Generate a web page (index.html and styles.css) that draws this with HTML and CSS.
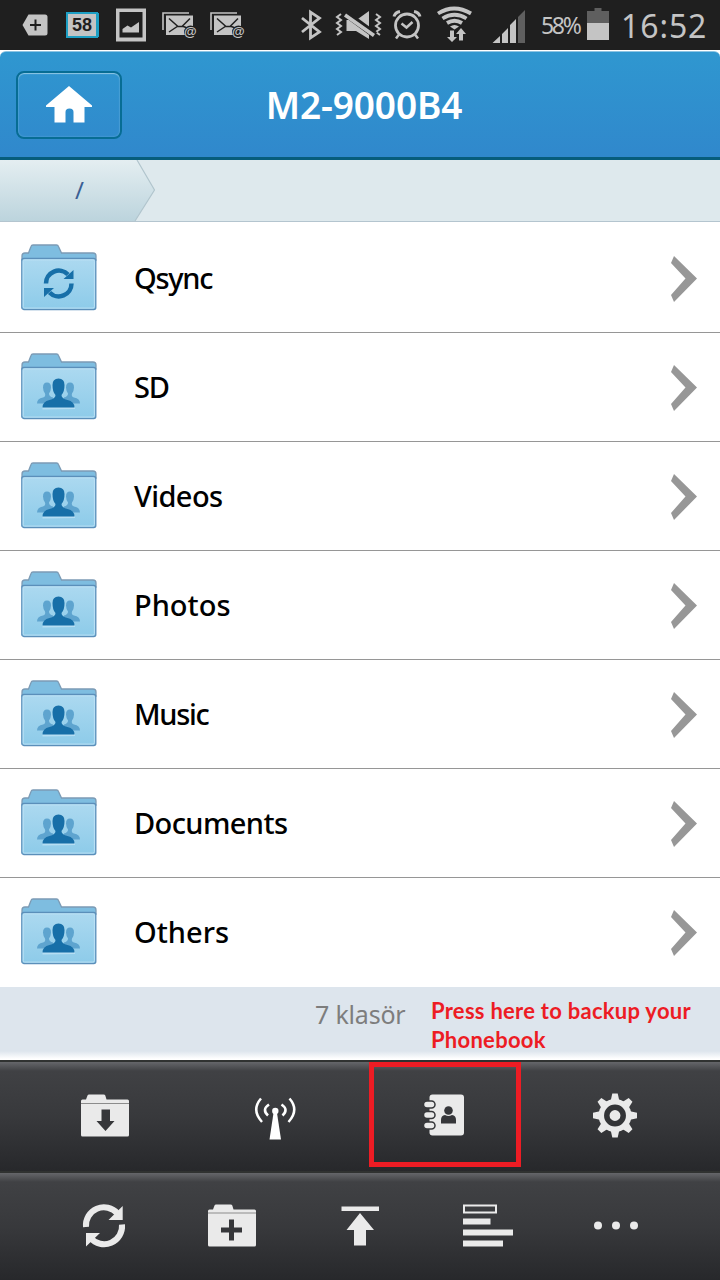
FILE: index.html
```html
<!DOCTYPE html>
<html lang="tr">

<head>
    <meta charset="UTF-8">
    <meta name="viewport" content="width=device-width, initial-scale=1.0">
    <title>M2-9000B4</title>
    <link rel="stylesheet" href="styles.css">
</head>

<body>

    <!-- shared icons -->
    <svg class="defs" width="0" height="0">
        <defs>
            <linearGradient id="folderFill" x1="0" y1="0" x2="0" y2="1">
                <stop offset="0" stop-color="#acd9f0" />
                <stop offset="1" stop-color="#8dcbe9" />
            </linearGradient>
            <linearGradient id="crumbFill" x1="0" y1="0" x2="0" y2="1">
                <stop offset="0" stop-color="#e4eef1" />
                <stop offset="1" stop-color="#bcd4dd" />
            </linearGradient>
        </defs>
        <symbol id="folder" viewBox="0 0 78 70">
            <path d="M2 17V13q0-3 3-3H8.500L11 3.500Q11.500 2 13 2H36.500Q38 2 38.500 3.500L41.500 10H73q3 0 3 3v4z" fill="#7ebde0" stroke="#7c9bb5" stroke-width="1.300" />
            <rect x="1.800" y="15.500" width="74" height="51" rx="2" fill="url(#folderFill)" stroke="#5b8fba" stroke-width="1.300" />
            <rect x="3.200" y="16.900" width="71.200" height="48.200" rx="1.500" fill="none" stroke="#bce1f5" />
        </symbol>
        <symbol id="people" viewBox="0 0 78 70">
            <path d="M17 59.500q0-5 6-6 3-1 2-4-2-3-2-6 0-5 4-5t4 5q0 3-2 6 0 3 4 4v6zM60 59.500q0-5-6-6-3-1-2-4 2-3 2-6 0-5-4-5t-4 5q0 3 2 6 0 3-4 4v6z" fill="#5ea4cf" />
            <path d="M22.500 65.500V63H55v2z" fill="#b6def3" />
            <path d="M22.500 63.500q0-6 7-7.500 6-1.500 6-5-3-3-3-10 0-6.500 6-6.500t6 6.500q0 7-3 10 0 3.500 6 5 7 1.500 7 7.500z" fill="#176fa8" />
        </symbol>
        <symbol id="chevron" viewBox="0 0 28 48">
            <path d="M4 1L27 23.500 4 47 1 40 15.500 23.500 1 8z" fill="#979797" />
        </symbol>
        <symbol id="mail" viewBox="0 0 36 50">
            <path d="M1 30V13H27" fill="none" stroke="#c4c4c4" stroke-width="1.600" />
            <path d="M4 15.500H31V35H4z" fill="#c4c4c4" />
            <path d="M7 18.500l9 8h4l8-8M7 32l9-6M28 29l-8-3" fill="none" stroke="#1f1f1f" stroke-width="1.500" />
            <circle cx="28.500" cy="32" r="6.500" fill="#1f1f1f" />
        </symbol>
    </svg>

    <div class="status">
        <svg class="st-plus" width="26" height="50" viewBox="22 0 26 50">
            <path d="M28.500 14.500H45q2.500 0 2.500 2.500V33q0 2.500-2.500 2.500H28.500L22.500 25z" fill="#c4c4c4" />
            <path d="M30 25H41M35.500 19.500V30.500" stroke="#1f1f1f" stroke-width="2" />
        </svg>
        <span class="st-charge">58</span>
        <svg class="st-picture" width="30" height="50" viewBox="116 0 30 50">
            <path d="M116 8.500H146V41.500H116zM119.500 12V37.500H142.500V12z" fill="#c4c4c4" fill-rule="evenodd" />
            <path d="M122.500 32.500V29l5-3.500 3.500 2 8-5.500V32.500z" fill="#c4c4c4" />
        </svg>
        <div class="st-mail first">
            <svg width="36" height="50"><use href="#mail" /></svg>
            <span class="at">@</span>
        </div>
        <div class="st-mail">
            <svg width="36" height="50"><use href="#mail" /></svg>
            <span class="at">@</span>
        </div>
        <svg class="st-right" width="240" height="50" viewBox="298 0 240 50" fill="#c4c4c4">
            <path d="M302 18L319.500 32 310.500 38V12L319.500 18 302 32" fill="none" stroke="#c4c4c4" stroke-width="2.800" />
            <g fill="none" stroke="#c4c4c4" stroke-width="2">
                <path d="M341 14l-4 3 4 3-4 3 4 3-4 3 4 3-4 3M376 14l4 3-4 3 4 3-4 3 4 3-4 3 4 3" />
            </g>
            <path d="M346.500 20V31H356L369 39V11L356.500 20z" />
            <path d="M345 13L375 35" stroke="#1f1f1f" stroke-width="7" />
            <path d="M345 15L374 35.500" stroke="#c4c4c4" stroke-width="3.600" />
            <circle cx="407" cy="25.500" r="11.500" fill="none" stroke="#c4c4c4" stroke-width="2.800" />
            <path d="M401.500 23.500l5 4 6-5.500M399 34.500l-3 4M415 34.500l3 4" fill="none" stroke="#c4c4c4" stroke-width="2.500" />
            <path d="M394 16.500q1-4 6-5M420 16.500q-1-4-6-5" fill="none" stroke="#c4c4c4" stroke-width="3" />
            <g fill="none" stroke="#c4c4c4" stroke-width="3.800">
                <path d="M438 13.500q16-10 33 0M442.500 18.500q12-7.500 24 0M447 23q7.500-4.500 15 0" />
            </g>
            <path d="M450 26.500q4.500-3 9 0l-4.500 3z" />
            <path d="M450 30.500h4V37h3l-5 5-5-5h3zM459 40.500h4V34h3l-5-6-5 6h3z" />
            <path d="M492.500 43L500 36V43zM502 34L508 28V43H502zM510 25L516 19V43H510z" />
            <path d="M518 17L525 10V43H518z" fill="#5f5f5f" />
        </svg>
        <span class="st-percent">58%</span>
        <svg class="st-battery" width="22" height="50" viewBox="587 0 22 50">
            <path d="M587 11H594.500V8H601.500V11H609V23H587z" fill="#5f5f5f" />
            <path d="M587 23H609V40H587z" fill="#c4c4c4" />
        </svg>
        <span class="st-time">16:52</span>
    </div>

    <header>
        <button class="home">
            <svg width="46" height="37" viewBox="0 0 46 37">
                <path d="M23 0L46 19.500V21H38.500V36.500H27.500V26q0-3.500-4-3.500t-4 3.500V36.500H8.500V21H0V19.500z" fill="#fff" />
            </svg>
        </button>
        <h1>M2-9000B4</h1>
    </header>

    <nav class="crumbs">
        <svg class="crumb-bg" width="156" height="62" viewBox="0 0 156 62">
            <path d="M0 0H137L154.500 30 135 61H0z" fill="url(#crumbFill)" />
            <path d="M137 0L154.500 30 135 61" fill="none" stroke="#b1c5cd" stroke-width="1.200" />
        </svg>
        <span class="crumb">/</span>
    </nav>

    <main>
        <div class="row">
            <svg class="folder" width="78" height="70">
                <use href="#folder" />
                <g fill="none" stroke="#176fa8" stroke-width="4.500">
                    <path d="M26 40.500A12.800 12.800 0 0 1 48 31.500M51.500 40.500A12.800 12.800 0 0 1 29.500 49.500" />
                </g>
                <path d="M53.500 27V36H43.500zM24 54V45H34z" fill="#176fa8" />
            </svg>
            <span class="name tight">Qsync</span>
            <svg class="chevron" width="28" height="48"><use href="#chevron" /></svg>
        </div>
        <div class="row">
            <svg class="folder" width="78" height="70"><use href="#folder" /><use href="#people" y="-8" /></svg>
            <span class="name tight">SD</span>
            <svg class="chevron" width="28" height="48"><use href="#chevron" /></svg>
        </div>
        <div class="row">
            <svg class="folder" width="78" height="70"><use href="#folder" /><use href="#people" y="-8" /></svg>
            <span class="name">Videos</span>
            <svg class="chevron" width="28" height="48"><use href="#chevron" /></svg>
        </div>
        <div class="row">
            <svg class="folder" width="78" height="70"><use href="#folder" /><use href="#people" y="-8" /></svg>
            <span class="name loose">Photos</span>
            <svg class="chevron" width="28" height="48"><use href="#chevron" /></svg>
        </div>
        <div class="row">
            <svg class="folder" width="78" height="70"><use href="#folder" /><use href="#people" y="-8" /></svg>
            <span class="name tight">Music</span>
            <svg class="chevron" width="28" height="48"><use href="#chevron" /></svg>
        </div>
        <div class="row">
            <svg class="folder" width="78" height="70"><use href="#folder" /><use href="#people" y="-8" /></svg>
            <span class="name">Documents</span>
            <svg class="chevron" width="28" height="48"><use href="#chevron" /></svg>
        </div>
        <div class="row">
            <svg class="folder" width="78" height="70"><use href="#folder" /><use href="#people" y="-8" /></svg>
            <span class="name loose">Others</span>
            <svg class="chevron" width="28" height="48"><use href="#chevron" /></svg>
        </div>
    </main>

    <div class="summary">
        <span class="count">7 klasör</span>
        <p class="hint">Press here to backup your<br>Phonebook</p>
    </div>

    <div class="toolbar top">
        <div class="tool">
            <svg width="52" height="52" viewBox="0 0 52 52">
                <path d="M2 11q0-1.500 1.500-1.500H7L8.500 5.500Q9 4.500 10 4.500H24.500Q26 4.500 26.300 5.500L27.500 9.500H48.500Q50 9.500 50 11V45q0 1.500-1.500 1.500H3.500Q2 46.500 2 45z" fill="#eaeaea" />
                <path d="M2 13.500H50" stroke="#8c8c8c" />
                <path d="M22.500 19.500H31V31H35.500L26.500 41 17.500 31H22.500z" fill="#36373a" />
            </svg>
        </div>
        <div class="tool">
            <svg width="52" height="52" viewBox="0 0 52 52" fill="#fff">
                <circle cx="26.300" cy="21" r="3.200" />
                <path d="M24.500 23H28L32 49.500H20.500z" />
                <g fill="none" stroke="#fff">
                    <path d="M12 8.500Q2 20 13 32M40.500 8.500Q50.500 20 39.500 32" stroke-width="2.500" />
                    <path d="M20 14.500Q12.500 19.500 19 25.500M32.500 14.500Q40 19.500 33.500 25.500" stroke-width="2.600" />
                </g>
            </svg>
        </div>
        <div class="tool">
            <svg width="52" height="52" viewBox="0 0 52 52">
                <rect x="10.500" y="4.500" width="34.500" height="41" rx="3" fill="#eaeaea" />
                <g fill="#eaeaea" stroke="#36373a" stroke-width="1.500">
                    <rect x="4.500" y="11" width="11.500" height="7" rx="3.500" />
                    <rect x="4.500" y="21.500" width="11.500" height="7" rx="3.500" />
                    <rect x="4.500" y="32" width="11.500" height="7" rx="3.500" />
                </g>
                <circle cx="29.500" cy="20.500" r="4.300" fill="#36373a" />
                <path d="M22 33.500V30q0-4.500 4-5 3.500 2 7 0 4 .5 4 5V33.500z" fill="#36373a" />
            </svg>
            <div class="highlight"></div>
        </div>
        <div class="tool">
            <svg width="52" height="52" viewBox="-26 -25.500 52 52" fill="#eaeaea">
                <path id="teeth" d="M-4.500-14L-2.700-22H2.700L4.500-14V14L2.700 22H-2.700L-4.500 14z" />
                <use href="#teeth" transform="rotate(45)" />
                <use href="#teeth" transform="rotate(90)" />
                <use href="#teeth" transform="rotate(135)" />
                <circle r="16.500" />
                <circle r="8.200" fill="#eaeaea" stroke="#333437" stroke-width="5.500" />
            </svg>
        </div>
    </div>

    <div class="toolbar bottom">
        <div class="tool">
            <svg width="52" height="52" viewBox="0 0 52 52">
                <path d="M8 27A18 18 0 0 1 39.500 13.500M44 24.500A18 18 0 0 1 12.500 38" fill="none" stroke="#eaeaea" stroke-width="6" />
                <path d="M44.700 6V20H30.500zM8 46.500V33H22z" fill="#eaeaea" />
            </svg>
        </div>
        <div class="tool">
            <svg width="52" height="52" viewBox="0 0 52 52">
                <path d="M2 11q0-1.500 1.500-1.500H7L8.500 5.500Q9 4.500 10 4.500H24.500Q26 4.500 26.300 5.500L27.500 9.500H48.500Q50 9.500 50 11V45q0 1.500-1.500 1.500H3.500Q2 46.500 2 45z" fill="#eaeaea" />
                <path d="M2 13H50" stroke="#8c8c8c" />
                <path d="M15 30H36M25.500 19.500V40.500" stroke="#36373a" stroke-width="5" />
            </svg>
        </div>
        <div class="tool">
            <svg width="52" height="52" viewBox="0 0 52 52" fill="#eaeaea">
                <path d="M7.500 6.500H45V11H7.500zM26 13L40 30H32V45.500H20V30H12.500z" />
            </svg>
        </div>
        <div class="tool">
            <svg width="52" height="52" viewBox="0 0 52 52" fill="#eaeaea">
                <path d="M2 5.500H34V12.500H2z" fill="none" stroke="#eaeaea" stroke-width="2" />
                <path d="M1 18.500H28.500V24.500H1zM1 29.500H51V35.500H1zM1 40.500H41V46.500H1z" />
            </svg>
        </div>
        <div class="tool">
            <svg width="52" height="52" viewBox="0 0 52 52" fill="#eaeaea">
                <circle cx="8" cy="25.500" r="4" />
                <circle cx="26" cy="25.500" r="4" />
                <circle cx="44" cy="25.500" r="4" />
            </svg>
        </div>
    </div>

</body>

</html>
```
FILE: styles.css
```css
* {
    box-sizing: border-box;
}

body {
    margin: 0;
    width: 720px;
    height: 1280px;
    overflow: hidden;
    background-color: #fff;
    color: #000;
    font-family: 'Noto Sans', sans-serif;
}

svg {
    display: block;
    flex: none;
}

.defs {
    position: absolute;
}

/* status bar */
.status {
    display: flex;
    align-items: center;
    height: 50px;
    padding-left: 22px;
    background-color: #1f1f1f;
    color: #c4c4c4;
    white-space: nowrap;
}

.st-charge {
    width: 32px;
    height: 26px;
    margin-left: 18px;
    border: 2px solid #1d9fc4;
    background-color: #c4c4c4;
    color: #1f1f1f;
    font: bold 18px/23px 'Liberation Sans', sans-serif;
    text-align: center;
    box-shadow: 2px 0 0 -1px #1d9fc4;
}

.st-picture {
    margin-left: 18px;
}

.st-mail {
    position: relative;
    margin-left: 12px;
}

.st-mail.first {
    margin-left: 16px;
}

.at {
    position: absolute;
    top: 24px;
    left: 22px;
    font: bold 13px/15px 'Liberation Sans', sans-serif;
}

.st-right {
    margin-left: 52px;
}

.st-percent {
    width: 49px;
    padding-left: 3px;
    font-size: 23px;
    letter-spacing: -2.3px;
}

.st-time {
    margin-left: 12px;
    font-size: 32px;
    letter-spacing: 0.9px;
}

/* title bar */
header {
    display: grid;
    grid-template-columns: 122px 1fr 114px;
    align-items: center;
    height: 109px;
    margin-top: 1px;
    border-top: 1px solid #8cc4e3;
    border-bottom: 3px solid #075d7c;
    border-radius: 6px 6px 0 0;
    background: linear-gradient(#2f97d0, #3088cc);
}

.home {
    display: flex;
    justify-content: center;
    align-items: center;
    width: 106px;
    height: 68px;
    margin-left: 16px;
    padding: 0;
    border: 2px solid #076d94;
    border-radius: 8px;
    background: none;
    box-shadow: inset 0 1px 1px #8ec7e4, inset 0 0 2px #67b0dc;
}

h1 {
    margin: 0;
    color: #fff;
    font-size: 37px;
    font-weight: 600;
    line-height: 50px;
    letter-spacing: -0.1px;
    text-align: center;
}

/* path */
.crumbs {
    display: grid;
    height: 62px;
    border-bottom: 1px solid #b4c5cf;
    background-color: #dee9ed;
}

.crumb-bg,
.crumb {
    grid-area: 1 / 1;
}

.crumb {
    padding-left: 75px;
    color: #3b5f94;
    font-size: 24px;
    line-height: 60px;
}

/* folder list */
main {
    padding-top: 2px;
}

.row {
    display: flex;
    align-items: center;
    height: 109px;
    padding: 0 22px 0 20px;
    border-bottom: 1px solid #969696;
}

.row:last-child {
    border-color: transparent;
}

.name {
    flex: 1;
    padding-left: 36px;
    font-size: 29px;
    font-weight: 500;
    line-height: 40px;
    letter-spacing: -0.6px;
}

.name.tight {
    letter-spacing: -1.3px;
}

.name.loose {
    letter-spacing: 0;
}

.chevron {
    margin-top: 1px;
}

/* footer line */
.summary {
    display: flex;
    height: 73px;
    background: linear-gradient(#dde5ed 64px, #fff 72px);
}

.count {
    width: 431px;
    padding-left: 315px;
    color: #7d7d7d;
    font-size: 25px;
    line-height: 54px;
    letter-spacing: -0.2px;
    white-space: nowrap;
}

.hint {
    margin: 9px 0 0;
    color: #ed1c24;
    font: bold 22px/29px Lato, sans-serif;
    letter-spacing: 0.27px;
    white-space: nowrap;
}

/* toolbars */
.toolbar {
    display: grid;
    border-top: 2px solid #303231;
    background: linear-gradient(#65666a, #404144 9px, #38393c 50%, #27282b);
}

.top {
    grid-template-columns: repeat(4, 1fr);
    height: 111px;
    padding: 0 20px;
}

.bottom {
    grid-template-columns: repeat(5, 1fr);
    height: 109px;
    padding: 0 40px;
}

.tool {
    position: relative;
    display: flex;
    justify-content: center;
    align-items: center;
    padding-bottom: 2px;
}

.highlight {
    position: absolute;
    top: 0;
    left: 9px;
    width: 152px;
    height: 105px;
    border: 5px solid #ed1c24;
}
```
